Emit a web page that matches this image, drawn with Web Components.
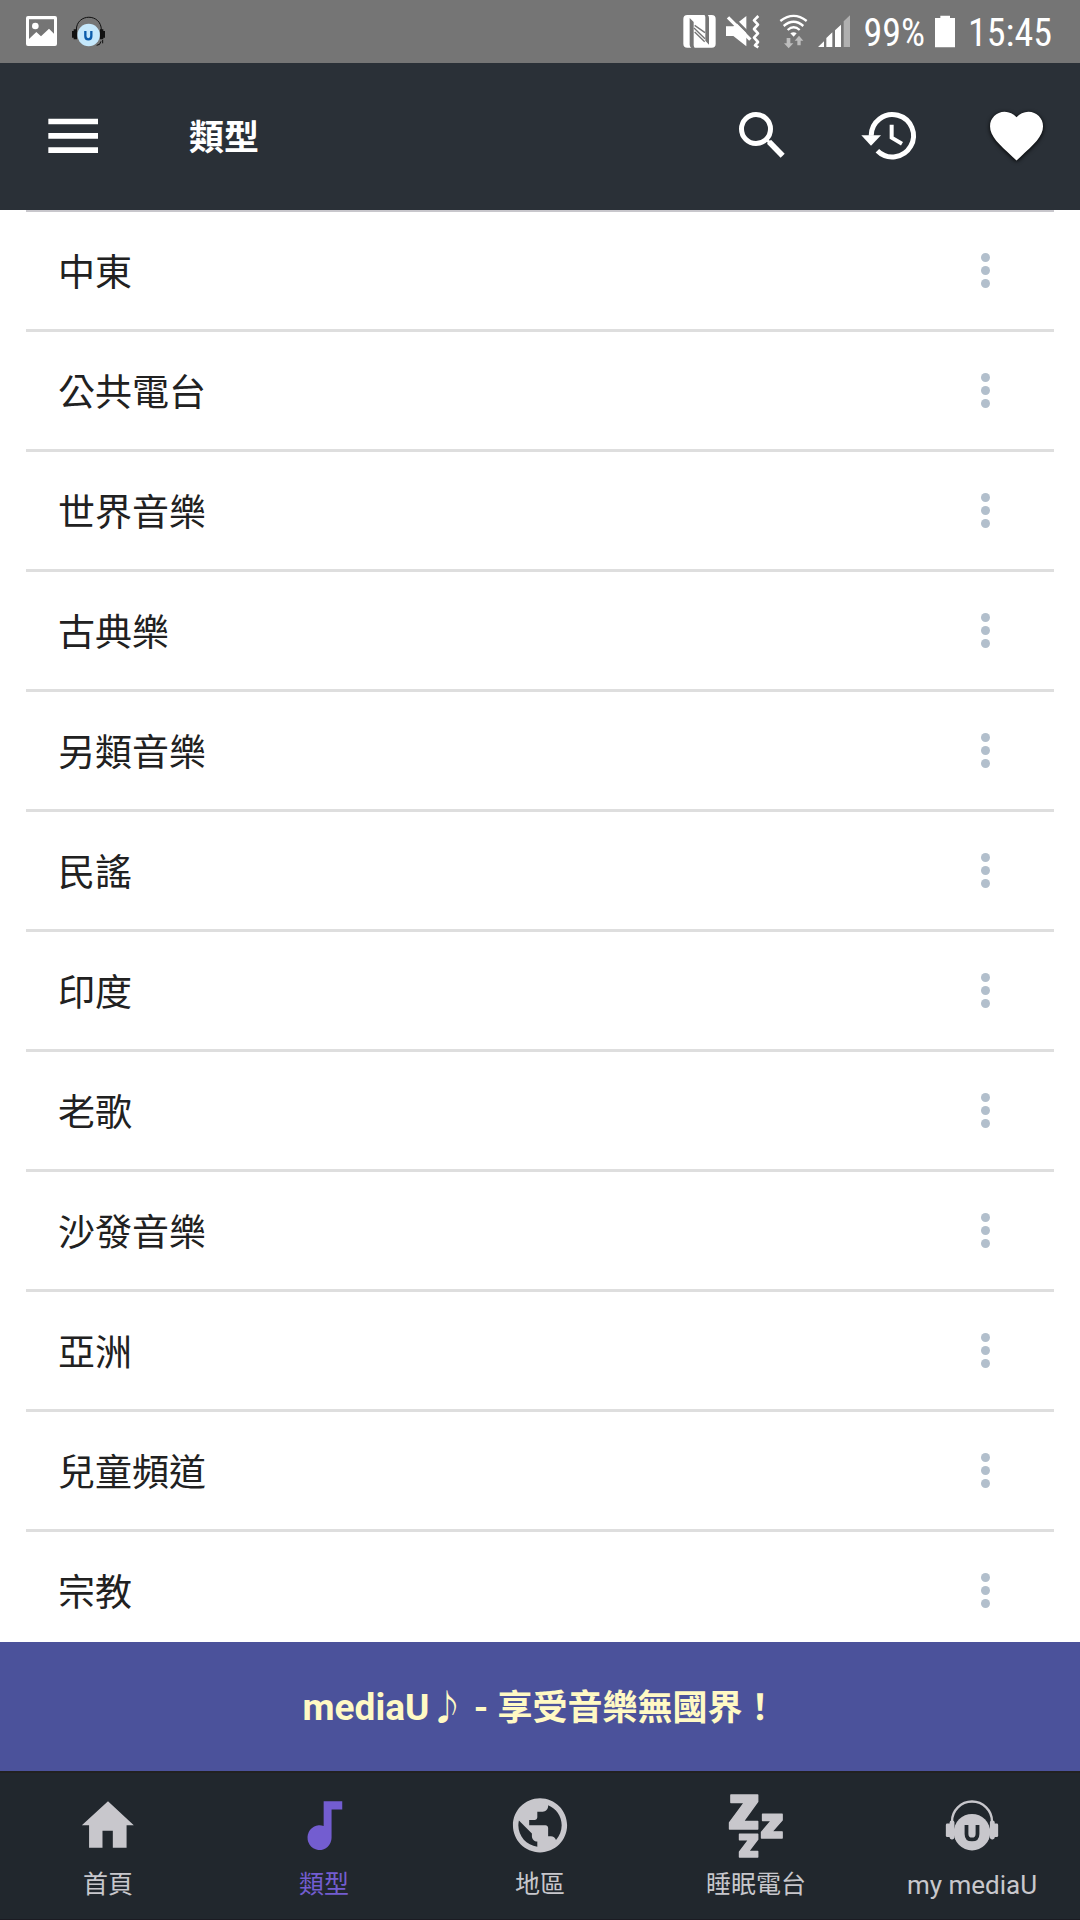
<!DOCTYPE html>
<html lang="zh-Hant">
<head>
<meta charset="utf-8">
<meta name="viewport" content="width=device-width, initial-scale=1">
<title>mediaU</title>
<style>
  html, body { margin: 0; height: 100%; background: #fff; }
  body { font-family: Roboto, "Noto Sans CJK TC", sans-serif; }
</style>
</head>
<body>
<media-app></media-app>

<script>
const define = (name, html, setup) => {
  const template = document.createElement('template');
  template.innerHTML = html;
  customElements.define(name, class extends HTMLElement {
    connectedCallback() {
      if (this.shadowRoot) return;
      this.attachShadow({ mode: 'open' }).append(template.content.cloneNode(true));
      if (setup) setup(this, this.shadowRoot);
    }
  });
};

const icons = {
  menu: `<svg viewBox="111 300 216 216" fill="#fff"><path d="M145 356h149v17H145zM145 399h149v17H145zM145 442h149v17H145z"/></svg>`,
  search: `<svg viewBox="81 90 216 216" fill="none" stroke="#fff" stroke-width="15"><circle cx="168" cy="177" r="43.5"/><path d="M200 209l10 10" stroke-width="9"/><path d="M207 215l41 42" stroke-width="17"/></svg>`,
  history: `<svg viewBox="462 90 216 216" fill="none" stroke="#fff" stroke-width="15"><path d="M513.5 197a63.5 63.5 0 1 1 18.600 45"/><path d="M484 196h59l-30 31z" fill="#fff" stroke="none"/><path d="M575 164v39l31 18" stroke-width="12"/></svg>`,
  heart: `<svg viewBox="843 90 216 216" fill="#fff" style="filter:drop-shadow(0 1px 2px #000)"><path transform="translate(854.2 101.500) scale(7.950)" d="M12 21.35l-1.450-1.320C5.400 15.360 2 12.280 2 8.500 2 5.420 4.420 3 7.500 3c1.740 0 3.410.81 4.500 2.090C13.090 3.810 14.760 3 16.500 3 19.580 3 22 5.420 22 8.500c0 3.780-3.400 6.860-8.550 11.540L12 21.350z"/></svg>`,
  home: `<svg viewBox="223 105 180 186" fill="currentColor"><path d="M313 126l75 70h-21v65h-40v-49h-30v49h-39v-65h-21z"/></svg>`,
  genre: `<svg viewBox="851 105 180 186" fill="currentColor"><path d="M940 126h54v24h-31v82a35 36 0 1 1-23-34z"/></svg>`,
  region: `<svg viewBox="1479 105 180 186" fill="currentColor"><path transform="translate(1474.600 101.600) scale(7.870)" d="M12 2C6.480 2 2 6.480 2 12s4.480 10 10 10 10-4.480 10-10S17.520 2 12 2zm-1 17.930c-3.950-.49-7-3.850-7-7.930 0-.62.08-1.210.21-1.790L9 15v1c0 1.100.9 2 2 2v1.930zm6.900-2.540c-.26-.81-1-1.390-1.900-1.390h-1v-3c0-.55-.45-1-1-1H8v-2h2c.55 0 1-.45 1-1V7h2c1.100 0 2-.9 2-2v-.41c2.930 1.190 5 4.060 5 7.410 0 2.080-.8 3.970-2.100 5.390z"/></svg>`,
  sleep: `<svg viewBox="538 105 180 186" fill="currentColor" stroke="currentColor" stroke-width="4" stroke-linejoin="round"><path d="M555 108h78v19l-42 58h42v22h-82v-19l43-58h-39z"/><path d="M647 164h57v17l-30 34h30v18h-60v-17l29-34h-26z"/><path d="M580 222h53v15l-27 35h27v16h-53v-15l27-35h-27z"/></svg>`,
  user: `<svg viewBox="1163 105 180 186" fill="currentColor"><path d="M1195 188v-4a58 57 0 0 1 116 0v4" fill="none" stroke="currentColor" stroke-width="7"/><circle cx="1253" cy="216" r="53"/><rect x="1177" y="191" width="18" height="39" rx="4"/><rect x="1188" y="182" width="14" height="55" rx="6"/><rect x="1305" y="182" width="14" height="55" rx="6"/><rect x="1312" y="191" width="17" height="39" rx="4"/><path d="M1237 195v26q0 16 16 16t16-16v-26" fill="none" stroke="#21272d" stroke-width="11"/></svg>`
};

define('app-icon', `<style>:host{display:block} svg{display:block;width:100%;height:100%}</style>`,
  (host, root) => root.append(document.createRange().createContextualFragment(icons[host.getAttribute('name')])));

define('status-bar', `
<style>
  :host { display: flex; align-items: center; justify-content: space-between; flex: none; box-sizing: border-box;
    padding: 0 28px 0 26px; background: #757575; color: #fff;
    font: 38px/59px "Roboto Condensed", "Liberation Sans Narrow", Roboto, sans-serif; }
  div { display: flex; align-items: center; gap: 10px; }
  span { padding-top: 4px; }
  .left { gap: 15px; }
  .texts { gap: 10px; margin-left: 4px; }
  svg { display: block; height: 63px; }
  .wifi { margin-left: 9px; }
  .clock { margin-left: 3px; }
</style>
<div class="left">
  <svg width="31" viewBox="78 0 93 189"><path fill="#fff" fill-rule="evenodd" d="M84 48h81q6 0 6 6v78q0 6-6 6H84q-6 0-6-6V54q0-6 6-6zM87 58v59l22-21 14 13 24-23 15 15V58z"/><circle cx="106" cy="78" r="10" fill="#fff"/></svg>
  <svg width="33" viewBox="216 0 99 189"><path d="M229 90c0-51 75-51 75 0" fill="none" stroke="#111" stroke-width="3"/><path d="M216 93h5v-5h10v30h-10v-5h-5zM315 93h-5v-5h-10v30h10v-5h5z" fill="#111"/><path d="M308 120v10M303 124q-2 12-13 12" fill="none" stroke="#111" stroke-width="3"/><circle cx="266" cy="105" r="33.500" fill="#c5e8fc"/><path d="M256 93v15q0 10 9 10t9-10V93" fill="none" stroke="#0b5cab" stroke-width="7"/></svg>
</div>
<div>
  <svg width="33" viewBox="72 0 99 189"><rect x="73" y="45" width="97" height="98" rx="12" fill="#fff"/><path d="M92 54l12 12v70q0 4 3 8h-10q-5-4-5-10zM150 134l-11-12V52q0-4-3-8h10q4 4 4 10z" fill="#757575"/><path d="M105 84l33 32M107 96l30 29M107 76l31 22" fill="none" stroke="#757575" stroke-width="4"/></svg>
  <svg width="34" viewBox="201 0 102 189"><path d="M201 79h22l39-31v91l-39-31h-22z" fill="#fff"/><path d="M217 48l66 66" stroke="#757575" stroke-width="8"/><path d="M207 52l67 67" stroke="#fff" stroke-width="10"/><path d="M298 48l-13 13 12 13-12 13 12 13-12 13 12 13-9 10 10 6" fill="none" stroke="#fff" stroke-width="8" stroke-linejoin="round"/></svg>
  <svg class="wifi" width="29" viewBox="360 0 87 189"><path d="M364 63q40-31 79 0M374 78q30-25 59 0M386 90q18-16 36 0" fill="none" stroke="#fff" stroke-width="7"/><path d="M394 100q10-7 19 0l-9 10z" fill="#fff"/><path d="M383 114h11v16h9l-14 15-14-15h8zM415 136v-14h-8l13-15 13 15h-8v14z" fill="#bdbdbd"/></svg>
  <svg width="32" viewBox="477 0 96 189"><path d="M477 141l18-17v17zM502 114l18-17v44h-18zM528 91l18-17v67h-18z" fill="#fff"/><path d="M554 64l19-18v95h-19z" fill="#b0b0b0"/></svg>
  <div class="texts">
    <span>99%</span>
    <svg width="20" viewBox="825 0 60 189"><path d="M825 54h16v-7h29v7h15v88h-60z" fill="#fff"/></svg>
    <span class="clock">15:45</span>
  </div>
</div>`);

define('title-bar', `
<style>
  :host { display: flex; align-items: center; flex: none; padding-bottom: 1px; background: #2a3037; color: #fff; }
  button { display: flex; align-items: center; justify-content: center; width: 127px; height: 146px; padding: 0; border: 0; background: none; }
  .menu { width: 146px; }
  app-icon { width: 72px; height: 72px; }
  h1 { flex: 1; margin: 0; padding: 6px 0 0 43px; font-size: 35px; line-height: 48px; font-weight: 700; }
</style>
<button class="menu" aria-label="選單"><app-icon name="menu"></app-icon></button>
<h1><slot></slot></h1>
<button aria-label="搜尋"><app-icon name="search"></app-icon></button>
<button aria-label="歷史"><app-icon name="history"></app-icon></button>
<button aria-label="最愛"><app-icon name="heart"></app-icon></button>`);

define('genre-row', `
<style>
  :host { display: flex; align-items: center; border-bottom: 3px solid #dedede; padding-left: 32px; color: #212121; font-size: 37px; line-height: 57px; }
  span { flex: 1; padding: 33px 0 27px; }
  button { display: flex; flex-direction: column; align-items: center; justify-content: center; gap: 4px; align-self: stretch; width: 137px; padding: 0; border: 0; background: none; }
  i { width: 9px; height: 9px; border-radius: 50%; background: #b2bfcc; }
</style>
<span><slot></slot></span>
<button aria-label="更多"><i></i><i></i><i></i></button>`);

define('promo-banner', `
<style>
  :host { display: block; flex: none; padding: 42px 0 38px; background: #4b529b; color: #fff9c4; text-align: center; font-size: 35px; line-height: 48px; font-weight: 700; }
</style>
<slot></slot>`);

define('nav-tab', `
<style>
  :host { display: block; flex: 1; color: #c8c7cc; font-size: 25px; }
  :host([latin]) { font-size: 26px; }
  :host([active]) { color: #735dd0; }
  a { display: flex; flex-direction: column; align-items: center; gap: 9px; padding: 21px 0 16px; color: inherit; text-decoration: none; line-height: 36px; }
  app-icon { width: 62px; height: 64px; }
</style>
<a href="#"><app-icon name="home"></app-icon><span><slot></slot></span></a>`,
  (host, root) => {
    const icon = document.createElement('app-icon');
    icon.setAttribute('name', host.getAttribute('icon'));
    root.querySelector('app-icon').replaceWith(icon);
  });

define('tab-bar', `
<style>:host { display: flex; flex: none; background: #21272d; border-top: 2px solid #212121; border-bottom: 1px solid #1b1b22; }</style>
<slot></slot>`);

define('media-app', `
<style>
  :host { display: flex; flex-direction: column; height: 100vh; overflow: hidden; }
  main { flex: 1; min-height: 0; overflow: hidden; padding: 0 26px; }
  .list { border-top: 2px solid #c8c7cc; }
  .brand { font-size: 37px; }
</style>
<status-bar></status-bar>
<title-bar>類型</title-bar>
<main><div class="list">
  <genre-row>中東</genre-row>
  <genre-row>公共電台</genre-row>
  <genre-row>世界音樂</genre-row>
  <genre-row>古典樂</genre-row>
  <genre-row>另類音樂</genre-row>
  <genre-row>民謠</genre-row>
  <genre-row>印度</genre-row>
  <genre-row>老歌</genre-row>
  <genre-row>沙發音樂</genre-row>
  <genre-row>亞洲</genre-row>
  <genre-row>兒童頻道</genre-row>
  <genre-row>宗教</genre-row>
</div></main>
<promo-banner><span class="brand">mediaU</span>♪<span class="brand"> - </span>享受音樂無國界！</promo-banner>
<tab-bar>
  <nav-tab icon="home">首頁</nav-tab>
  <nav-tab icon="genre" active>類型</nav-tab>
  <nav-tab icon="region">地區</nav-tab>
  <nav-tab icon="sleep">睡眠電台</nav-tab>
  <nav-tab icon="user" latin>my mediaU</nav-tab>
</tab-bar>`);
</script>
</body>
</html>
